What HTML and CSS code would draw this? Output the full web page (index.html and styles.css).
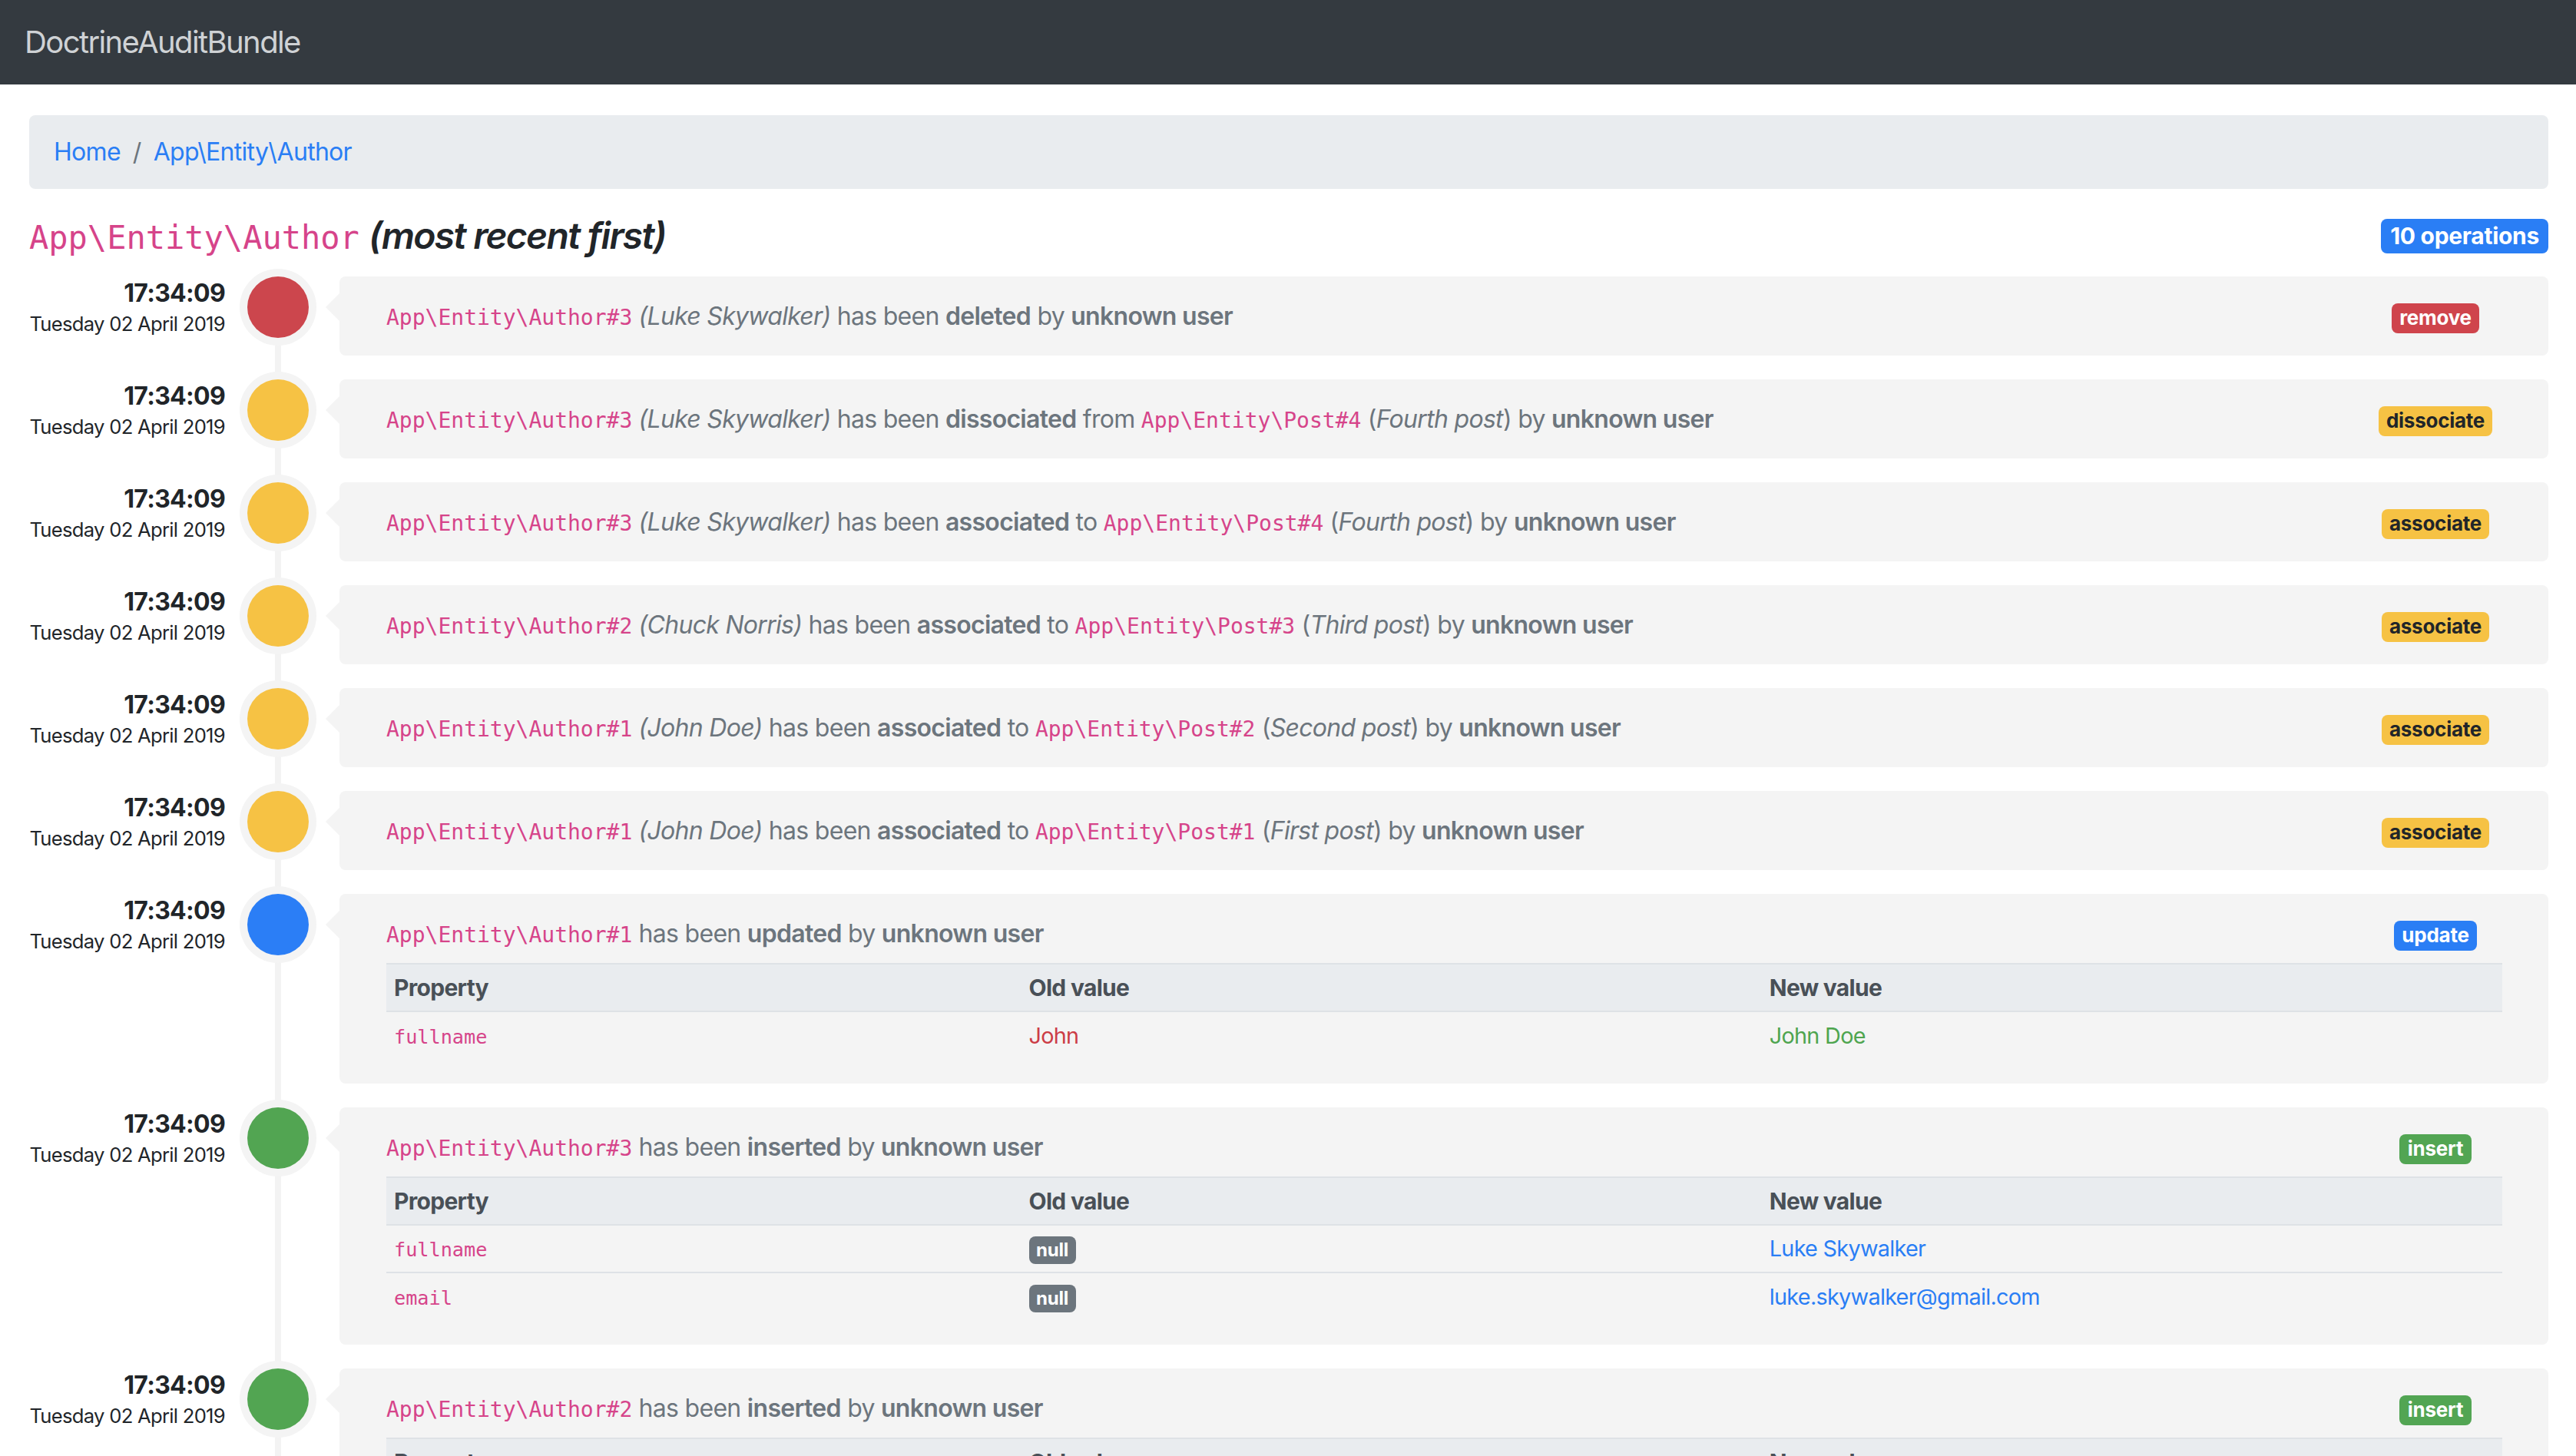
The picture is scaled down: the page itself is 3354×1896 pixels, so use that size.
FILE: index.html
```html
<!DOCTYPE html>
<html lang="en">
<head>
<meta charset="utf-8">
<title>DoctrineAuditBundle</title>
<link rel="stylesheet" href="styles.css">
</head>
<body>
<nav class="navbar"><span class="brand">DoctrineAuditBundle</span></nav>
<main class="container">
  <ol class="breadcrumb">
    <li><a href="#">Home</a></li>
    <li class="sep">/</li>
    <li><a href="#">App\Entity\Author</a></li>
  </ol>
  <div class="page-head">
    <h4 class="title"><code>App\Entity\Author</code> <em>(most recent first)</em></h4>
    <span class="badge badge-lg badge-primary">10 operations</span>
  </div>

  <div class="timeline">
    <div class="entry">
      <div class="when"><div class="time">17:34:09</div><div class="date">Tuesday 02 April 2019</div></div>
      <div class="marker danger"></div>
      <div class="card">
        <div class="card-head">
          <div class="summary"><code>App\Entity\Author#3</code> <em>(Luke Skywalker)</em> has been <b>deleted</b> by <b>unknown user</b></div>
          <div class="type"><span class="badge badge-danger">remove</span></div>
        </div>
      </div>
    </div>

    <div class="entry">
      <div class="when"><div class="time">17:34:09</div><div class="date">Tuesday 02 April 2019</div></div>
      <div class="marker warning"></div>
      <div class="card">
        <div class="card-head">
          <div class="summary"><code>App\Entity\Author#3</code> <em>(Luke Skywalker)</em> has been <b>dissociated</b> from <code>App\Entity\Post#4</code> (<em>Fourth post</em>) by <b>unknown user</b></div>
          <div class="type"><span class="badge badge-warning">dissociate</span></div>
        </div>
      </div>
    </div>

    <div class="entry">
      <div class="when"><div class="time">17:34:09</div><div class="date">Tuesday 02 April 2019</div></div>
      <div class="marker warning"></div>
      <div class="card">
        <div class="card-head">
          <div class="summary"><code>App\Entity\Author#3</code> <em>(Luke Skywalker)</em> has been <b>associated</b> to <code>App\Entity\Post#4</code> (<em>Fourth post</em>) by <b>unknown user</b></div>
          <div class="type"><span class="badge badge-warning">associate</span></div>
        </div>
      </div>
    </div>

    <div class="entry">
      <div class="when"><div class="time">17:34:09</div><div class="date">Tuesday 02 April 2019</div></div>
      <div class="marker warning"></div>
      <div class="card">
        <div class="card-head">
          <div class="summary"><code>App\Entity\Author#2</code> <em>(Chuck Norris)</em> has been <b>associated</b> to <code>App\Entity\Post#3</code> (<em>Third post</em>) by <b>unknown user</b></div>
          <div class="type"><span class="badge badge-warning">associate</span></div>
        </div>
      </div>
    </div>

    <div class="entry">
      <div class="when"><div class="time">17:34:09</div><div class="date">Tuesday 02 April 2019</div></div>
      <div class="marker warning"></div>
      <div class="card">
        <div class="card-head">
          <div class="summary"><code>App\Entity\Author#1</code> <em>(John Doe)</em> has been <b>associated</b> to <code>App\Entity\Post#2</code> (<em>Second post</em>) by <b>unknown user</b></div>
          <div class="type"><span class="badge badge-warning">associate</span></div>
        </div>
      </div>
    </div>

    <div class="entry">
      <div class="when"><div class="time">17:34:09</div><div class="date">Tuesday 02 April 2019</div></div>
      <div class="marker warning"></div>
      <div class="card">
        <div class="card-head">
          <div class="summary"><code>App\Entity\Author#1</code> <em>(John Doe)</em> has been <b>associated</b> to <code>App\Entity\Post#1</code> (<em>First post</em>) by <b>unknown user</b></div>
          <div class="type"><span class="badge badge-warning">associate</span></div>
        </div>
      </div>
    </div>

    <div class="entry">
      <div class="when"><div class="time">17:34:09</div><div class="date">Tuesday 02 April 2019</div></div>
      <div class="marker primary"></div>
      <div class="card">
        <div class="card-head">
          <div class="summary"><code>App\Entity\Author#1</code> has been <b>updated</b> by <b>unknown user</b></div>
          <div class="type"><span class="badge badge-primary">update</span></div>
        </div>
        <table class="diff">
          <colgroup><col class="c-prop"><col class="c-old"><col class="c-new"></colgroup>
          <thead><tr><th>Property</th><th>Old value</th><th>New value</th></tr></thead>
          <tbody>
            <tr><td><code>fullname</code></td><td class="old">John</td><td class="new">John Doe</td></tr>
          </tbody>
        </table>
      </div>
    </div>

    <div class="entry">
      <div class="when"><div class="time">17:34:09</div><div class="date">Tuesday 02 April 2019</div></div>
      <div class="marker success"></div>
      <div class="card">
        <div class="card-head">
          <div class="summary"><code>App\Entity\Author#3</code> has been <b>inserted</b> by <b>unknown user</b></div>
          <div class="type"><span class="badge badge-success">insert</span></div>
        </div>
        <table class="diff">
          <colgroup><col class="c-prop"><col class="c-old"><col class="c-new"></colgroup>
          <thead><tr><th>Property</th><th>Old value</th><th>New value</th></tr></thead>
          <tbody>
            <tr><td><code>fullname</code></td><td><span class="badge badge-secondary">null</span></td><td class="val">Luke Skywalker</td></tr>
            <tr><td><code>email</code></td><td><span class="badge badge-secondary">null</span></td><td class="val">luke.skywalker@gmail.com</td></tr>
          </tbody>
        </table>
      </div>
    </div>

    <div class="entry">
      <div class="when"><div class="time">17:34:09</div><div class="date">Tuesday 02 April 2019</div></div>
      <div class="marker success"></div>
      <div class="card">
        <div class="card-head">
          <div class="summary"><code>App\Entity\Author#2</code> has been <b>inserted</b> by <b>unknown user</b></div>
          <div class="type"><span class="badge badge-success">insert</span></div>
        </div>
        <table class="diff">
          <colgroup><col class="c-prop"><col class="c-old"><col class="c-new"></colgroup>
          <thead><tr><th>Property</th><th>Old value</th><th>New value</th></tr></thead>
          <tbody>
            <tr><td><code>fullname</code></td><td><span class="badge badge-secondary">null</span></td><td class="val">Chuck Norris</td></tr>
            <tr><td><code>email</code></td><td><span class="badge badge-secondary">null</span></td><td class="val">chuck.norris@gmail.com</td></tr>
          </tbody>
        </table>
      </div>
    </div>

    <div class="entry">
      <div class="when"><div class="time">17:34:09</div><div class="date">Tuesday 02 April 2019</div></div>
      <div class="marker success"></div>
      <div class="card">
        <div class="card-head">
          <div class="summary"><code>App\Entity\Author#1</code> has been <b>inserted</b> by <b>unknown user</b></div>
          <div class="type"><span class="badge badge-success">insert</span></div>
        </div>
        <table class="diff">
          <colgroup><col class="c-prop"><col class="c-old"><col class="c-new"></colgroup>
          <thead><tr><th>Property</th><th>Old value</th><th>New value</th></tr></thead>
          <tbody>
            <tr><td><code>fullname</code></td><td><span class="badge badge-secondary">null</span></td><td class="val">John</td></tr>
            <tr><td><code>email</code></td><td><span class="badge badge-secondary">null</span></td><td class="val">john.doe@gmail.com</td></tr>
          </tbody>
        </table>
      </div>
    </div>
  </div>
</main>
</body>
</html>
```

FILE: styles.css
```css
* { box-sizing: border-box; }

html, body {
  margin: 0;
  padding: 0;
  background: #ffffff;
}

body {
  font-family: Inter, "Noto Sans", "Liberation Sans", sans-serif;
  font-size: 32px;
  line-height: 1.5;
  letter-spacing: -0.022em;
  color: #212529;
}

code {
  font-family: "DejaVu Sans Mono", "Liberation Mono", monospace;
  font-size: 87.5%;
  line-height: 1;
  letter-spacing: 0;
  color: #d6448a;
}

a {
  color: #2a7ef5;
  text-decoration: none;
}

/* Navbar */
.navbar {
  height: 110px;
  background: #343a40;
  display: flex;
  align-items: center;
  padding: 0 32px;
}

.brand {
  font-size: 40px;
  line-height: 60px;
  color: #cfd2d5;
  letter-spacing: -1.6px;
}

/* Container */
.container {
  padding: 40px 36px 0 38px;
}

/* Breadcrumb */
.breadcrumb {
  list-style: none;
  margin: 0;
  padding: 24px 32px;
  background: #e9ecef;
  border-radius: 8px;
  display: flex;
  line-height: 48px;
}

.breadcrumb .sep {
  color: #6c757d;
  padding: 0 16px;
}

/* Page heading */
.page-head {
  margin-top: 32px;
  margin-bottom: 24px;
  height: 58px;
  display: flex;
  align-items: center;
  justify-content: space-between;
}

.title {
  margin: 0;
  font-size: 48px;
  line-height: 58px;
  font-weight: 500;
}

.title code {
  font-size: 42px;
}

.title em {
  font-weight: 600;
  letter-spacing: -1.7px;
}

/* Badges */
.badge {
  display: inline-block;
  font-size: 26px;
  font-weight: 700;
  line-height: 1;
  padding: 6.5px 10.4px;
  border-radius: 8px;
  white-space: nowrap;
  color: #ffffff;
  letter-spacing: -0.01em;
  vertical-align: middle;
}

.badge-lg {
  font-size: 30px;
  padding: 7.5px 12px;
}

.badge-primary { background: #2a7ef5; }
.badge-danger { background: #cf444c; }
.badge-warning { background: #f6c244; color: #212529; }
.badge-success { background: #52a553; }
.badge-secondary {
  background: #6c757d;
  font-size: 24px;
  padding: 6px 9.6px;
}

/* Timeline */
.timeline {
  position: relative;
}

.timeline::before {
  content: "";
  position: absolute;
  left: 320px;
  top: 0;
  bottom: 0;
  width: 8px;
  background: #f3f3f3;
}

.entry {
  display: flex;
  align-items: flex-start;
  margin-bottom: 31px;
}

.when {
  width: 255px;
  flex: none;
  text-align: right;
  white-space: nowrap;
}

.time {
  font-size: 32px;
  font-weight: 700;
  line-height: 44px;
  color: #212529;
}

.date {
  font-size: 25.6px;
  line-height: 36px;
  color: #212529;
}

.marker {
  position: relative;
  flex: none;
  width: 80px;
  height: 80px;
  border-radius: 50%;
  margin: 0 40px 0 29px;
  box-shadow: 0 0 0 10px #f4f4f4;
}

.marker.danger { background: #cc464d; }
.marker.warning { background: #f6c244; }
.marker.primary { background: #2b7ef6; }
.marker.success { background: #52a552; }

.card {
  position: relative;
  flex: 1;
  min-width: 0;
  background: #f4f4f4;
  border-radius: 8px;
  padding: 28px 60px 27px 61px;
  color: #6c757d;
}

.card::before {
  content: "";
  position: absolute;
  left: -18px;
  top: 22px;
  border-right: 18px solid #f4f4f4;
  border-top: 18.5px solid transparent;
  border-bottom: 18.5px solid transparent;
}

.card-head {
  display: flex;
  align-items: center;
  height: 48px;
}

.summary {
  flex: 1;
  line-height: 48px;
  white-space: nowrap;
}

.summary b {
  font-weight: 600;
}

.type {
  flex: none;
  width: 174px;
  text-align: center;
}

/* Diff table */
.diff {
  width: 100%;
  margin-top: 14px;
  margin-bottom: 5px;
  border-collapse: collapse;
  table-layout: fixed;
  font-size: 28.8px;
}

.c-prop { width: 30%; }
.c-old { width: 35%; }
.c-new { width: 35%; }

.diff th {
  text-align: left;
  font-size: 30px;
  font-weight: 700;
  color: #495057;
  background: #e9ecef;
  border-top: 2px solid #dee2e6;
  border-bottom: 2px solid #dee2e6;
  padding: 10px 10px;
  line-height: 40px;
}

.diff td {
  border-top: 2px solid #dee2e6;
  padding: 10px 10px;
  height: 62px;
  line-height: 40px;
  color: #6c757d;
}

.diff td.old { color: #cc3d46; }
.diff td.new { color: #4ea54f; }
.diff td.val { color: #2a7ef5; }
```
